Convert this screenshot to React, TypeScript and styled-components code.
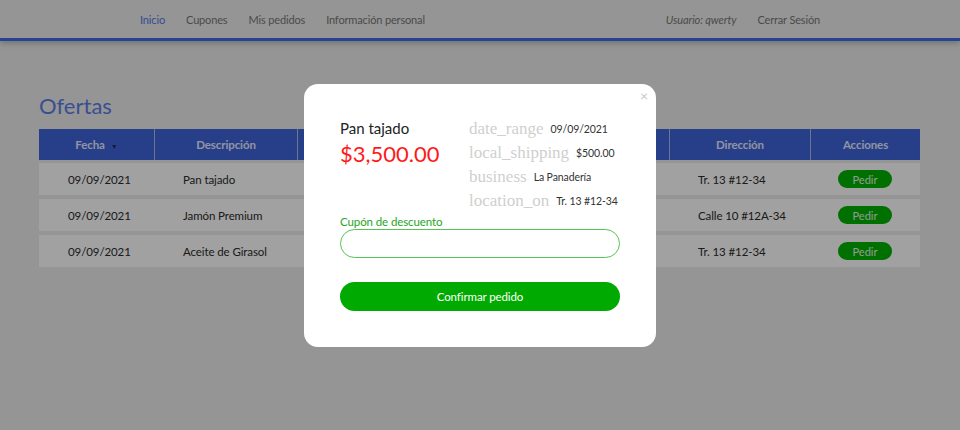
import React from "react"
import styled, { createGlobalStyle } from "styled-components"

const GlobalStyle = createGlobalStyle`
    html, body {
        margin: 0;
        padding: 0;
        background: #ececec;
        font-family: Lato, "Noto Sans", sans-serif;
    }
    * {
        box-sizing: border-box;
    }
`

const SCxPage = styled.div`
    position: relative;
    width: 960px;
    height: 430px;
    overflow: hidden;
    background: #ececec;
`

const SCxNavbar = styled.nav`
    height: 41px;
    background: #ececec;
    border-bottom: 3px solid #436ae6;
    box-shadow: 0 2px 6px rgba(0, 0, 0, 0.25);
`

const SCxNavInner = styled.div`
    width: 720px;
    height: 100%;
    margin: 0 auto;
    padding: 1px 20px 0;
    display: flex;
    align-items: center;
    justify-content: space-between;
`

const SCxNavGroup = styled.div`
    display: flex;
    align-items: center;
    gap: 21px;
`

const SCxNavLink = styled.a<{ active?: boolean }>`
    font-size: 11px;
    letter-spacing: -0.15px;
    color: ${props => (props.active ? "#5478e6" : "#777")};
    text-decoration: none;
    cursor: pointer;
`

const SCxUser = styled.span`
    font-size: 11px;
    letter-spacing: -0.1px;
    font-style: italic;
    color: #777;
`

const SCxContent = styled.main`
    padding: 51px 40px 0 39px;
`

const SCxTitle = styled.h1`
    margin: 0 0 10px;
    font-size: 22px;
    font-weight: 400;
    color: #5b7ee6;
    line-height: 27px;
`

const SCxTable = styled.div`
    display: flex;
    flex-direction: column;
    gap: 4px;
`

const COLUMNS = "115px 143px 186px 186px 141px 110px"

const SCxHeadRow = styled.div`
    display: grid;
    grid-template-columns: ${COLUMNS};
    height: 31px;
    margin-bottom: -1px;
    background: #3f62d9;
`

const SCxHeadCell = styled.div`
    display: flex;
    align-items: center;
    justify-content: center;
    gap: 6px;
    font-size: 11.5px;
    font-weight: 700;
    letter-spacing: -0.1px;
    color: #e4eaff;
    & + & {
        border-left: 1px solid #aab8e8;
    }
`

const SCxSortArrow = styled.span`
    font-size: 7px;
    color: #1d2c66;
    margin-top: 3px;
`

const SCxRow = styled.div`
    display: grid;
    grid-template-columns: ${COLUMNS};
    height: 32px;
    background: #ffffff;
`

const SCxCell = styled.div<{ center?: boolean }>`
    display: flex;
    align-items: center;
    justify-content: ${props => (props.center ? "center" : "flex-start")};
    padding-left: ${props => (props.center ? "0" : "29px")};
    font-size: 11.5px;
    letter-spacing: -0.1px;
    color: #2b2b2b;
`

const SCxPedir = styled.button`
    width: 54px;
    height: 18px;
    border: none;
    border-radius: 9px;
    background: #00b300;
    color: #e6f5e6;
    font-family: inherit;
    font-size: 11px;
    padding: 0;
`

const SCxOverlay = styled.div`
    position: absolute;
    inset: 0;
    background: rgba(0, 0, 0, 0.37);
    display: flex;
    justify-content: center;
    align-items: flex-start;
    padding-top: 84px;
`

const SCxModal = styled.div`
    position: relative;
    width: 352px;
    height: 263px;
    background: #fff;
    border-radius: 14px;
    padding: 33px 36px 0;
`

const SCxClose = styled.span`
    position: absolute;
    top: 5px;
    right: 8px;
    font-size: 14px;
    color: #c8c8c8;
    line-height: 14px;
`

const SCxTop = styled.div`
    display: flex;
    margin-bottom: 1px;
`

const SCxLeft = styled.div`
    width: 129px;
    flex-shrink: 0;
    padding-top: 2px;
`

const SCxName = styled.div`
    font-size: 15px;
    color: #222;
    line-height: 18px;
`

const SCxPrice = styled.div`
    margin-top: 4px;
    font-size: 22px;
    color: #ff1a1a;
    line-height: 26px;
`

const SCxDetails = styled.div`
    display: flex;
    flex-direction: column;
`

const SCxDetail = styled.div`
    display: flex;
    align-items: center;
    gap: 7px;
    height: 24px;
    white-space: nowrap;
`

const SCxIconName = styled.span`
    font-family: "Liberation Serif", serif;
    font-size: 17px;
    line-height: 20px;
    color: #cfcfcf;
`

const SCxValue = styled.span`
    font-size: 10.5px;
    letter-spacing: -0.1px;
    color: #333;
`

const SCxLabel = styled.label`
    display: block;
    font-size: 11.5px;
    letter-spacing: -0.1px;
    color: #1ea51e;
    line-height: 15px;
`

const SCxInput = styled.input`
    display: block;
    width: 100%;
    height: 29px;
    border: 1px solid #55c455;
    border-radius: 15px;
    outline: none;
`

const SCxConfirm = styled.button`
    display: block;
    width: 100%;
    height: 29px;
    margin-top: 24px;
    border: none;
    border-radius: 15px;
    background: #00aa00;
    color: #fff;
    font-family: inherit;
    font-size: 11.5px;
    letter-spacing: -0.1px;
`

const rows = [
    { fecha: "09/09/2021", desc: "Pan tajado", dir: "Tr. 13 #12-34" },
    { fecha: "09/09/2021", desc: "Jamón Premium", dir: "Calle 10 #12A-34" },
    { fecha: "09/09/2021", desc: "Aceite de Girasol", dir: "Tr. 13 #12-34" }
]

const details = [
    { icon: "date_range", value: "09/09/2021" },
    { icon: "local_shipping", value: "$500.00" },
    { icon: "business", value: "La Panadería" },
    { icon: "location_on", value: "Tr. 13 #12-34" }
]

export default function App() {
    return (
        <SCxPage>
            <GlobalStyle />
            <SCxNavbar>
                <SCxNavInner>
                    <SCxNavGroup>
                        <SCxNavLink active>Inicio</SCxNavLink>
                        <SCxNavLink>Cupones</SCxNavLink>
                        <SCxNavLink>Mis pedidos</SCxNavLink>
                        <SCxNavLink>Información personal</SCxNavLink>
                    </SCxNavGroup>
                    <SCxNavGroup>
                        <SCxUser>Usuario: qwerty</SCxUser>
                        <SCxNavLink>Cerrar Sesión</SCxNavLink>
                    </SCxNavGroup>
                </SCxNavInner>
            </SCxNavbar>

            <SCxContent>
                <SCxTitle>Ofertas</SCxTitle>
                <SCxTable>
                    <SCxHeadRow>
                        <SCxHeadCell>
                            Fecha <SCxSortArrow>▼</SCxSortArrow>
                        </SCxHeadCell>
                        <SCxHeadCell>Descripción</SCxHeadCell>
                        <SCxHeadCell>Precio</SCxHeadCell>
                        <SCxHeadCell>Establecimiento</SCxHeadCell>
                        <SCxHeadCell>Dirección</SCxHeadCell>
                        <SCxHeadCell>Acciones</SCxHeadCell>
                    </SCxHeadRow>
                    {rows.map((row, i) => (
                        <SCxRow key={i}>
                            <SCxCell>{row.fecha}</SCxCell>
                            <SCxCell>{row.desc}</SCxCell>
                            <SCxCell>$3,500.00</SCxCell>
                            <SCxCell>La Panadería</SCxCell>
                            <SCxCell>{row.dir}</SCxCell>
                            <SCxCell center>
                                <SCxPedir>Pedir</SCxPedir>
                            </SCxCell>
                        </SCxRow>
                    ))}
                </SCxTable>
            </SCxContent>

            <SCxOverlay>
                <SCxModal>
                    <SCxClose>×</SCxClose>
                    <SCxTop>
                        <SCxLeft>
                            <SCxName>Pan tajado</SCxName>
                            <SCxPrice>$3,500.00</SCxPrice>
                        </SCxLeft>
                        <SCxDetails>
                            {details.map(d => (
                                <SCxDetail key={d.icon}>
                                    <SCxIconName>{d.icon}</SCxIconName>
                                    <SCxValue>{d.value}</SCxValue>
                                </SCxDetail>
                            ))}
                        </SCxDetails>
                    </SCxTop>
                    <SCxLabel>Cupón de descuento</SCxLabel>
                    <SCxInput />
                    <SCxConfirm>Confirmar pedido</SCxConfirm>
                </SCxModal>
            </SCxOverlay>
        </SCxPage>
    )
}
